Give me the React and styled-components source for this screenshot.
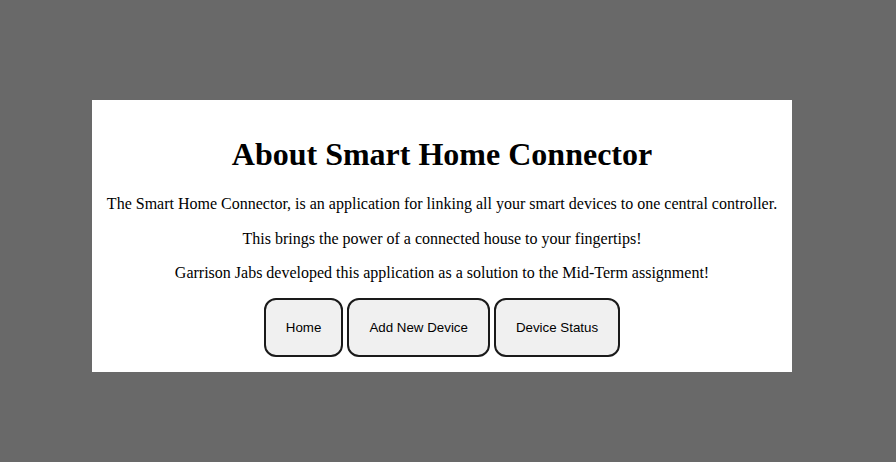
import React from "react";
import styled, { createGlobalStyle } from "styled-components";

const Global = createGlobalStyle`
  html, body {
    margin: 0;
    padding: 0;
    background: #696969;
    font-family: "Liberation Serif", "Times New Roman", serif;
  }
  #root { min-height: 462px; }
`;

const Page = styled.div`
  padding-top: 100px;
  padding-left: 92px;
`;

const Card = styled.section`
  width: 700px;
  box-sizing: border-box;
  background: #ffffff;
  padding: 15px 0 15px;
  text-align: center;
  color: #000;
`;

const Title = styled.h1`
  font-size: 32px;
  font-weight: bold;
  margin: 21.44px 0;
`;

const Text = styled.p`
  font-size: 16px;
  margin: 16px 0 ${(p) => (p.$lead ? "17px" : "16px")};
`;

const Nav = styled.nav`
  display: flex;
  justify-content: center;
  gap: 4px;
`;

const NavButton = styled.button`
  font-family: "Liberation Sans", Arial, sans-serif;
  font-size: 13.333px;
  color: #000;
  background: #f0f0f0;
  border: 2px solid #1a1a1a;
  border-radius: 12px;
  padding: 20px 20px;
  line-height: 15px;
  cursor: pointer;
`;

export default function App() {
  return (
    <>
      <Global />
      <Page>
        <Card>
          <Title>About Smart Home Connector</Title>
          <Text $lead>
            The Smart Home Connector, is an application for linking all your smart devices to one central controller.
          </Text>
          <Text>This brings the power of a connected house to your fingertips!</Text>
          <Text>
            Garrison Jabs developed this application as a solution to the Mid-Term assignment!
          </Text>
          <Nav>
            <NavButton>Home</NavButton>
            <NavButton>Add New Device</NavButton>
            <NavButton>Device Status</NavButton>
          </Nav>
        </Card>
      </Page>
    </>
  );
}
